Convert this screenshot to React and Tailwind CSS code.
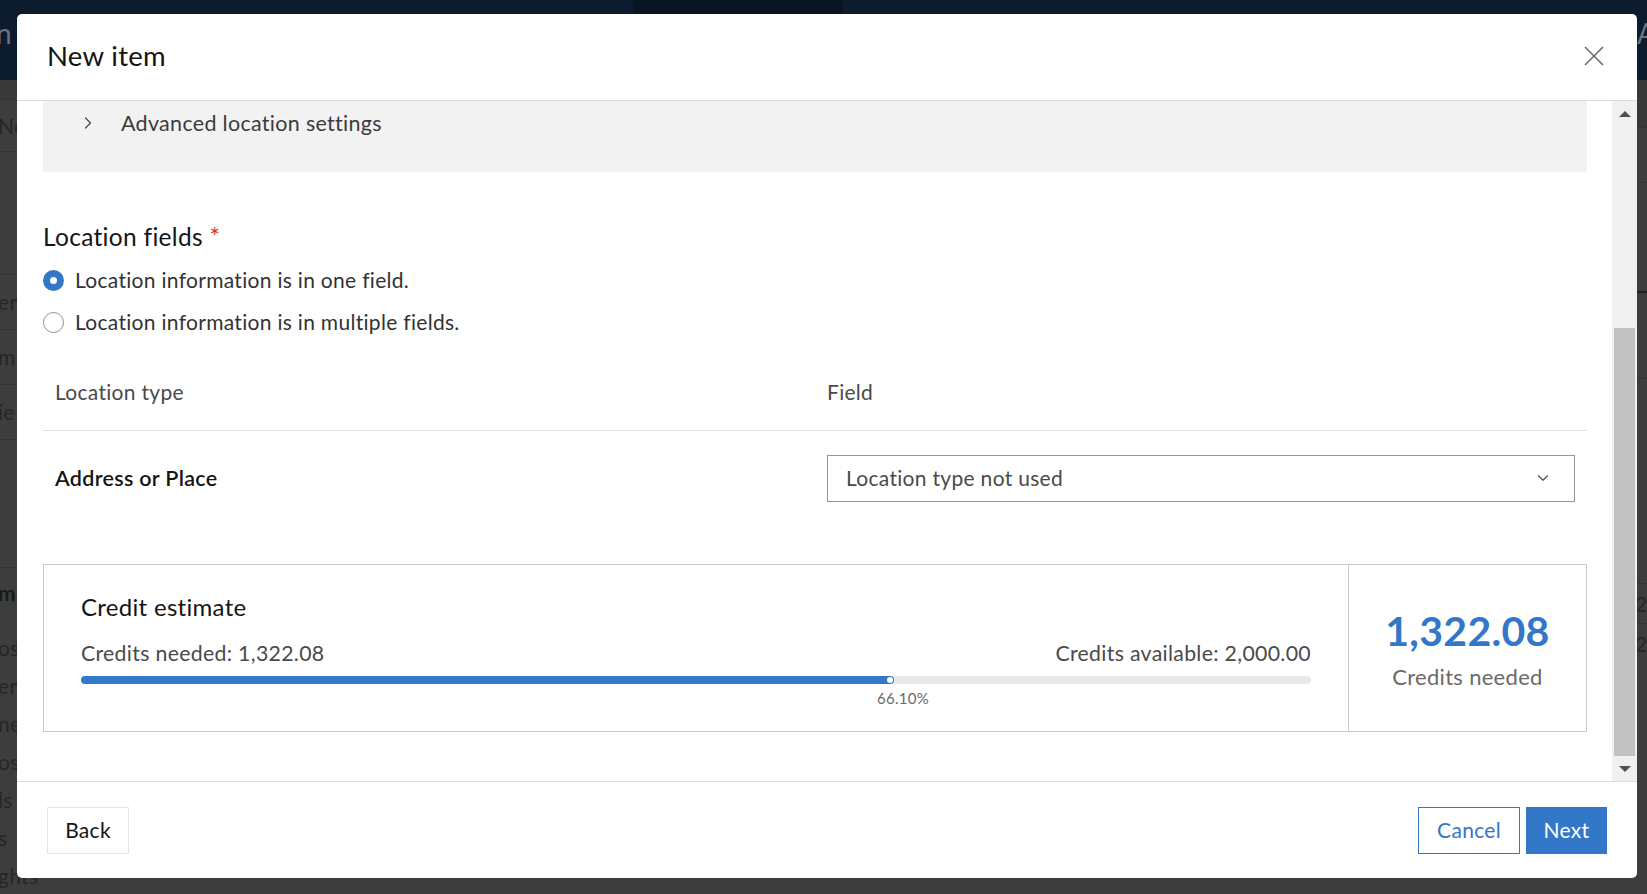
import { ChevronRight, ChevronDown } from "lucide-react";

const FONT = { fontFamily: "Lato, 'Noto Sans', sans-serif", letterSpacing: "0.3px" };

// dimmed page behind the dialog, only a sliver shows on each side
const bgRows = [
  { h: 20, text: "", line: true, shade: true },
  { h: 52, text: "Ne", line: true },
  { h: 123, text: "", line: true },
  { h: 55, text: "er", line: true },
  { h: 55, text: "m", line: true },
  { h: 55, text: "ie", line: true },
  { h: 128, text: "", line: true },
  { h: 50, text: "m", bold: true },
  { h: 11, text: "" },
  { h: 38, text: "os" },
  { h: 38, text: "er" },
  { h: 38, text: "ne" },
  { h: 38, text: "os" },
  { h: 38, text: "ls" },
  { h: 38, text: "s" },
  { h: 38, text: "ghts" },
];

function Background() {
  return (
    <div className="flex h-full w-full flex-col">
      <div className="flex h-[80px] shrink-0 bg-[#0c1b2d]">
        <div className="w-[633px] pt-[12px] text-[28px] text-[#6b7480]">
          <span className="-ml-[4px]">n</span>
        </div>
        <div className="h-[14px] w-[210px] bg-[#091522]" />
        <div className="flex-1" />
        <div className="w-[10px] overflow-hidden pt-[12px] text-[28px] text-[#6b7480]">A</div>
      </div>
      <div className="flex flex-1 bg-[#3d3d3d]">
        <div className="flex w-[400px] flex-col text-[21px] text-[#262626]">
          {bgRows.map((r, i) => (
            <div
              key={i}
              style={{ height: r.h }}
              className={`flex shrink-0 items-center ${r.line ? "border-b border-[#333333]" : ""} ${r.shade ? "bg-[#393939]" : ""} ${r.bold ? "font-bold text-[#1a1a1a]" : ""}`}
            >
              <span className="-ml-[2px]">{r.text}</span>
            </div>
          ))}
        </div>
        <div className="flex-1" />
        <div className="flex w-[20px] flex-col text-[21px] text-[#262626]">
          <div className="h-[48px] border-b border-[#333333] bg-[#383838]" />
          <div className="h-[55px] border-b border-[#333333]" />
          <div className="h-[110px] border-b-2 border-[#152236]" />
          <div className="h-[86px] border-b border-[#333333]" />
          <div className="h-[205px] border-b border-[#333333]" />
          <div className="flex h-[40px] items-center border-b border-[#333333] pl-[8px]">2</div>
          <div className="flex h-[40px] items-center pl-[8px]">2</div>
        </div>
      </div>
    </div>
  );
}

function Radio({ checked, label }) {
  return (
    <div className="flex h-[42px] items-center gap-[11px]">
      {checked ? (
        <span className="flex h-[21px] w-[21px] items-center justify-center rounded-full bg-[#3277c8]">
          <span className="h-[7px] w-[7px] rounded-full bg-white" />
        </span>
      ) : (
        <span className="h-[21px] w-[21px] rounded-full border-[1.5px] border-[#8f8f8f] bg-white" />
      )}
      <span className="text-[21px] text-[#323232]">{label}</span>
    </div>
  );
}

function CreditEstimate() {
  const pct = 66.1;
  return (
    <div className="mt-[39px] flex h-[168px] shrink-0 border border-[#cacaca]">
      <div className="flex flex-1 flex-col border-r border-[#cacaca] px-[37px] pt-[27px]">
        <div className="text-[24px] leading-[30px] text-[#151515]">Credit estimate</div>
        <div className="mt-[17px] flex justify-between text-[21.3px] leading-[28px] text-[#4a4a4a]">
          <span>Credits needed: 1,322.08</span>
          <span>Credits available: 2,000.00</span>
        </div>
        <div className="relative mt-[9px] h-[8px] rounded-full bg-[#e8e8e8]">
          <div
            className="flex h-full items-center justify-end rounded-full bg-[#3277c8]"
            style={{ width: `${pct}%` }}
          >
            <span className="mr-[1px] h-[6px] w-[6px] rounded-full bg-white" />
          </div>
          <span
            className="absolute top-[13px] -translate-x-1/2 text-[15px] leading-[18px] text-[#6a6a6a]"
            style={{ left: `calc(${pct}% + 9px)` }}
          >
            66.10%
          </span>
        </div>
      </div>
      <div className="flex w-[237px] flex-col items-center justify-center pt-[3px]">
        <div className="text-[41px] font-bold leading-[48px] text-[#3277c8]">1,322.08</div>
        <div className="mt-[7px] text-[22px] leading-[30px] text-[#6a6a6a]">Credits needed</div>
      </div>
    </div>
  );
}

function Scrollbar() {
  return (
    <div className="flex w-[25px] shrink-0 flex-col bg-[#f0f0f0]">
      <div className="flex h-[26px] items-center justify-center">
        <svg width="12" height="6" viewBox="0 0 12 6">
          <path d="M0 6 L6 0 L12 6 Z" fill="#505050" />
        </svg>
      </div>
      <div className="h-[201px]" />
      <div className="mx-[2px] flex-1 bg-[#c1c1c1]" />
      <div className="flex h-[25px] items-center justify-center">
        <svg width="12" height="6" viewBox="0 0 12 6">
          <path d="M0 0 L12 0 L6 6 Z" fill="#505050" />
        </svg>
      </div>
    </div>
  );
}

function Dialog() {
  return (
    <div className="flex h-full w-full flex-col overflow-hidden rounded-[5px] bg-white">
      {/* Header */}
      <div className="flex h-[87px] shrink-0 items-center justify-between border-b border-[#dcdcdc] pb-[3px] pl-[30px] pr-[33px]">
        <h2 className="text-[27.5px] text-[#151515]">New item</h2>
        <svg width="20" height="20" viewBox="0 0 20 20">
          <path d="M1 1 L19 19 M19 1 L1 19" stroke="#6b6b6b" strokeWidth="1.6" />
        </svg>
      </div>

      {/* Body */}
      <div className="flex flex-1">
        <div className="flex flex-1 flex-col pl-[26px] pr-[25px]">
          <div className="h-[71px] shrink-0 bg-[#f2f2f2]">
            <div className="flex h-[44px] items-center pl-[35px]">
              <ChevronRight size={20} strokeWidth={1.5} className="text-[#4a4a4a]" />
              <span className="ml-[23px] text-[21.5px] text-[#3b3b3b]">Advanced location settings</span>
            </div>
          </div>

          <div className="mt-[50px] text-[24.5px] leading-[30px] text-[#151515]">
            Location fields <span className="text-[#d83020]">*</span>
          </div>
          <div className="mt-[7px] flex flex-col">
            <Radio checked label="Location information is in one field." />
            <Radio label="Location information is in multiple fields." />
          </div>

          <div className="mt-[11px] grid h-[77px] shrink-0 grid-cols-2 items-center border-b border-[#dfdfdf] text-[21px] text-[#4a4a4a]">
            <div className="px-[12px]">Location type</div>
            <div className="px-[12px]">Field</div>
          </div>
          <div className="grid h-[94px] shrink-0 grid-cols-2 items-center">
            <div className="px-[12px] text-[21.5px] font-semibold text-[#151515]">Address or Place</div>
            <div className="px-[12px]">
              <div className="flex h-[47px] items-center justify-between border border-[#959595] pl-[18px] pr-[22px] text-[21px] text-[#4a4a4a]">
                <span>Location type not used</span>
                <ChevronDown size={18} strokeWidth={1.5} className="text-[#4a4a4a]" />
              </div>
            </div>
          </div>

          <CreditEstimate />
        </div>
        <Scrollbar />
      </div>

      {/* Footer */}
      <div className="flex h-[97px] shrink-0 items-center justify-between border-t border-[#dcdcdc] px-[30px]">
        <button className="h-[47px] w-[82px] border border-[#e6e6e6] bg-white text-[21px] text-[#151515]">
          Back
        </button>
        <div className="flex gap-[6px]">
          <button className="h-[47px] w-[102px] border border-[#3277c8] bg-white text-[21px] text-[#3277c8]">
            Cancel
          </button>
          <button className="h-[47px] w-[81px] bg-[#3277c8] text-[21px] text-white">Next</button>
        </div>
      </div>
    </div>
  );
}

export default function App() {
  return (
    <div className="relative h-[894px] w-[1647px] overflow-hidden" style={FONT}>
      <Background />
      <div className="absolute left-[17px] top-[14px] h-[864px] w-[1620px]">
        <Dialog />
      </div>
    </div>
  );
}
